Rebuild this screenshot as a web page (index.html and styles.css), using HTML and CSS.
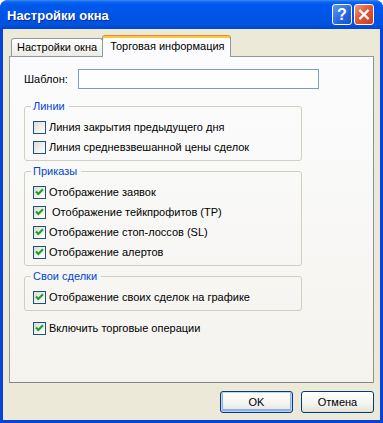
FILE: index.html
```html
<!DOCTYPE html>
<html>
<head>
    <title>Настройки окна</title>
    <meta charset="utf-8">
    <link rel="stylesheet" href="styles.css">
</head>
<body>
    <div class="window">
        <div class="titlebar">
            <span class="title">Настройки окна</span>
            <div class="title-btns">
                <span class="tbtn help">?</span>
                <span class="tbtn close">
                    <svg width="19" height="19" viewBox="0 0 19 19"><path d="M5.5 5.5 L13.5 13.5 M13.5 5.5 L5.5 13.5" stroke="#fff" stroke-width="2.4" stroke-linecap="square"/></svg>
                </span>
            </div>
        </div>

        <div class="client">
            <div class="tabs">
                <div class="tab">Настройки окна</div>
                <div class="tab active">Торговая информация</div>
            </div>

            <div class="panel">
                <div class="field-row">
                    <label class="field-label">Шаблон:</label>
                    <input class="input" type="text">
                </div>

                <fieldset class="group">
                    <legend>Линии</legend>
                    <div class="row"><span class="cb"></span><span>Линия закрытия предыдущего дня</span></div>
                    <div class="row"><span class="cb"></span><span>Линия средневзвешанной цены сделок</span></div>
                </fieldset>

                <fieldset class="group">
                    <legend>Приказы</legend>
                    <div class="row"><span class="cb checked"><svg width="11" height="11" viewBox="0 0 11 11"><path d="M2 4.5 L4.3 7 L9 2.3" fill="none" stroke="#21A121" stroke-width="2.2"/></svg></span><span>Отображение заявок</span></div>
                    <div class="row"><span class="cb checked"><svg width="11" height="11" viewBox="0 0 11 11"><path d="M2 4.5 L4.3 7 L9 2.3" fill="none" stroke="#21A121" stroke-width="2.2"/></svg></span><span>&nbsp;Отображение тейкпрофитов (ТР)</span></div>
                    <div class="row"><span class="cb checked"><svg width="11" height="11" viewBox="0 0 11 11"><path d="M2 4.5 L4.3 7 L9 2.3" fill="none" stroke="#21A121" stroke-width="2.2"/></svg></span><span>Отображение стоп-лоссов (SL)</span></div>
                    <div class="row"><span class="cb checked"><svg width="11" height="11" viewBox="0 0 11 11"><path d="M2 4.5 L4.3 7 L9 2.3" fill="none" stroke="#21A121" stroke-width="2.2"/></svg></span><span>Отображение алертов</span></div>
                </fieldset>

                <fieldset class="group">
                    <legend>Свои сделки</legend>
                    <div class="row"><span class="cb checked"><svg width="11" height="11" viewBox="0 0 11 11"><path d="M2 4.5 L4.3 7 L9 2.3" fill="none" stroke="#21A121" stroke-width="2.2"/></svg></span><span>Отображение своих сделок на графике</span></div>
                </fieldset>

                <div class="row single"><span class="cb checked"><svg width="11" height="11" viewBox="0 0 11 11"><path d="M2 4.5 L4.3 7 L9 2.3" fill="none" stroke="#21A121" stroke-width="2.2"/></svg></span><span>Включить торговые операции</span></div>
            </div>

            <div class="buttons">
                <button class="btn default">OK</button>
                <button class="btn">Отмена</button>
            </div>
        </div>
    </div>
</body>
</html>
```

FILE: styles.css
```css
* { box-sizing: border-box; }
body { margin: 0; font-family: "Liberation Sans", Arial, sans-serif; font-size: 11px; color: #000; background: #fff; }

.window { width: 383px; height: 423px; display: flex; flex-direction: column; background: #0842D6; border-radius: 8px 8px 0 0; overflow: hidden; }

.titlebar { height: 29px; flex: none; display: flex; align-items: center; justify-content: space-between; padding: 0 9px 0 7px;
    background: linear-gradient(#3A8BF6 0, #0E64EE 2px, #0058EE 5px, #0055E6 50%, #0052DF 85%, #0046CF 100%); }
.title { color: #fff; font-weight: bold; font-size: 13px; text-shadow: 1px 1px #0B2A8C; padding-top: 1px; }
.title-btns { display: flex; gap: 2px; }
.tbtn { width: 20px; height: 21px; border: 1px solid #fff; border-radius: 3px; display: flex; align-items: center; justify-content: center; color: #fff; }
.help { background: linear-gradient(135deg, #5C9BFA, #2663E0 60%, #1A4FCF); font-weight: bold; font-size: 16px; }
.close { background: linear-gradient(135deg, #F19B7E, #E2583B 45%, #C93D1F); }

.client { flex: 1; margin: 0 3px 3px; background: #ECE9D8; padding: 6px 6px 0; }

.tabs { display: flex; align-items: flex-end; height: 21px; padding-left: 2px; }
.tab { height: 18px; padding: 2px 5px 0 5px; border: 1px solid #919B9C; border-bottom: none; border-radius: 3px 3px 0 0;
    background: linear-gradient(#FFFFFF, #ECEBE6); }
.tab.active { height: 22px; margin-bottom: -1px; margin-left: -1px; padding: 4px 5px 0 7px; position: relative; z-index: 1;
    background: #FCFCFE; border-top: 1px solid #E68B2C; box-shadow: inset 0 2px #FFC83C; }

.panel { height: 327px; border: 1px solid #919B9C; border-right-color: #8D9392; border-bottom-color: #808686;
    background: linear-gradient(#FCFCFE, #F4F3EE); padding: 12px 0 0 14px; }

.field-row { display: flex; align-items: center; height: 20px; }
.field-label { width: 54px; }
.input { width: 241px; height: 20px; border: 1px solid #7F9DB9; background: #fff; margin: 0; padding: 0 3px; font: inherit; }

.group { width: 278px; margin: 11px 0 0; padding: 4px 8px 3px; border: 1px solid #D0D0BF; border-radius: 3px; }
.group + .group { margin-top: 4px; }
.group legend { color: #0046D5; line-height: 13px; padding: 0 4px 0 2px; margin-left: -2px; }

.row { display: flex; align-items: center; height: 20px; gap: 3px; white-space: nowrap; }
.row.single { margin: 7px 0 0 9px; }
.cb { width: 13px; height: 13px; flex: none; border: 1px solid #1C5180; display: flex; align-items: center; justify-content: center;
    background: linear-gradient(135deg, #DCDCD7, #F2F2EF 60%, #FFFFFF); }

.buttons { display: flex; justify-content: flex-end; gap: 8px; margin-top: 8px; }
.btn { width: 73px; height: 22px; font: inherit; color: #000; border: 1px solid #003C74; border-radius: 3px; padding: 0;
    background: linear-gradient(#FFFFFF, #F3F3EF 60%, #E3E2DA); }
.btn.default { box-shadow: inset 0 0 0 1px #C1D3FB, inset 0 -1px 0 2px #8FAEF0; }
```
